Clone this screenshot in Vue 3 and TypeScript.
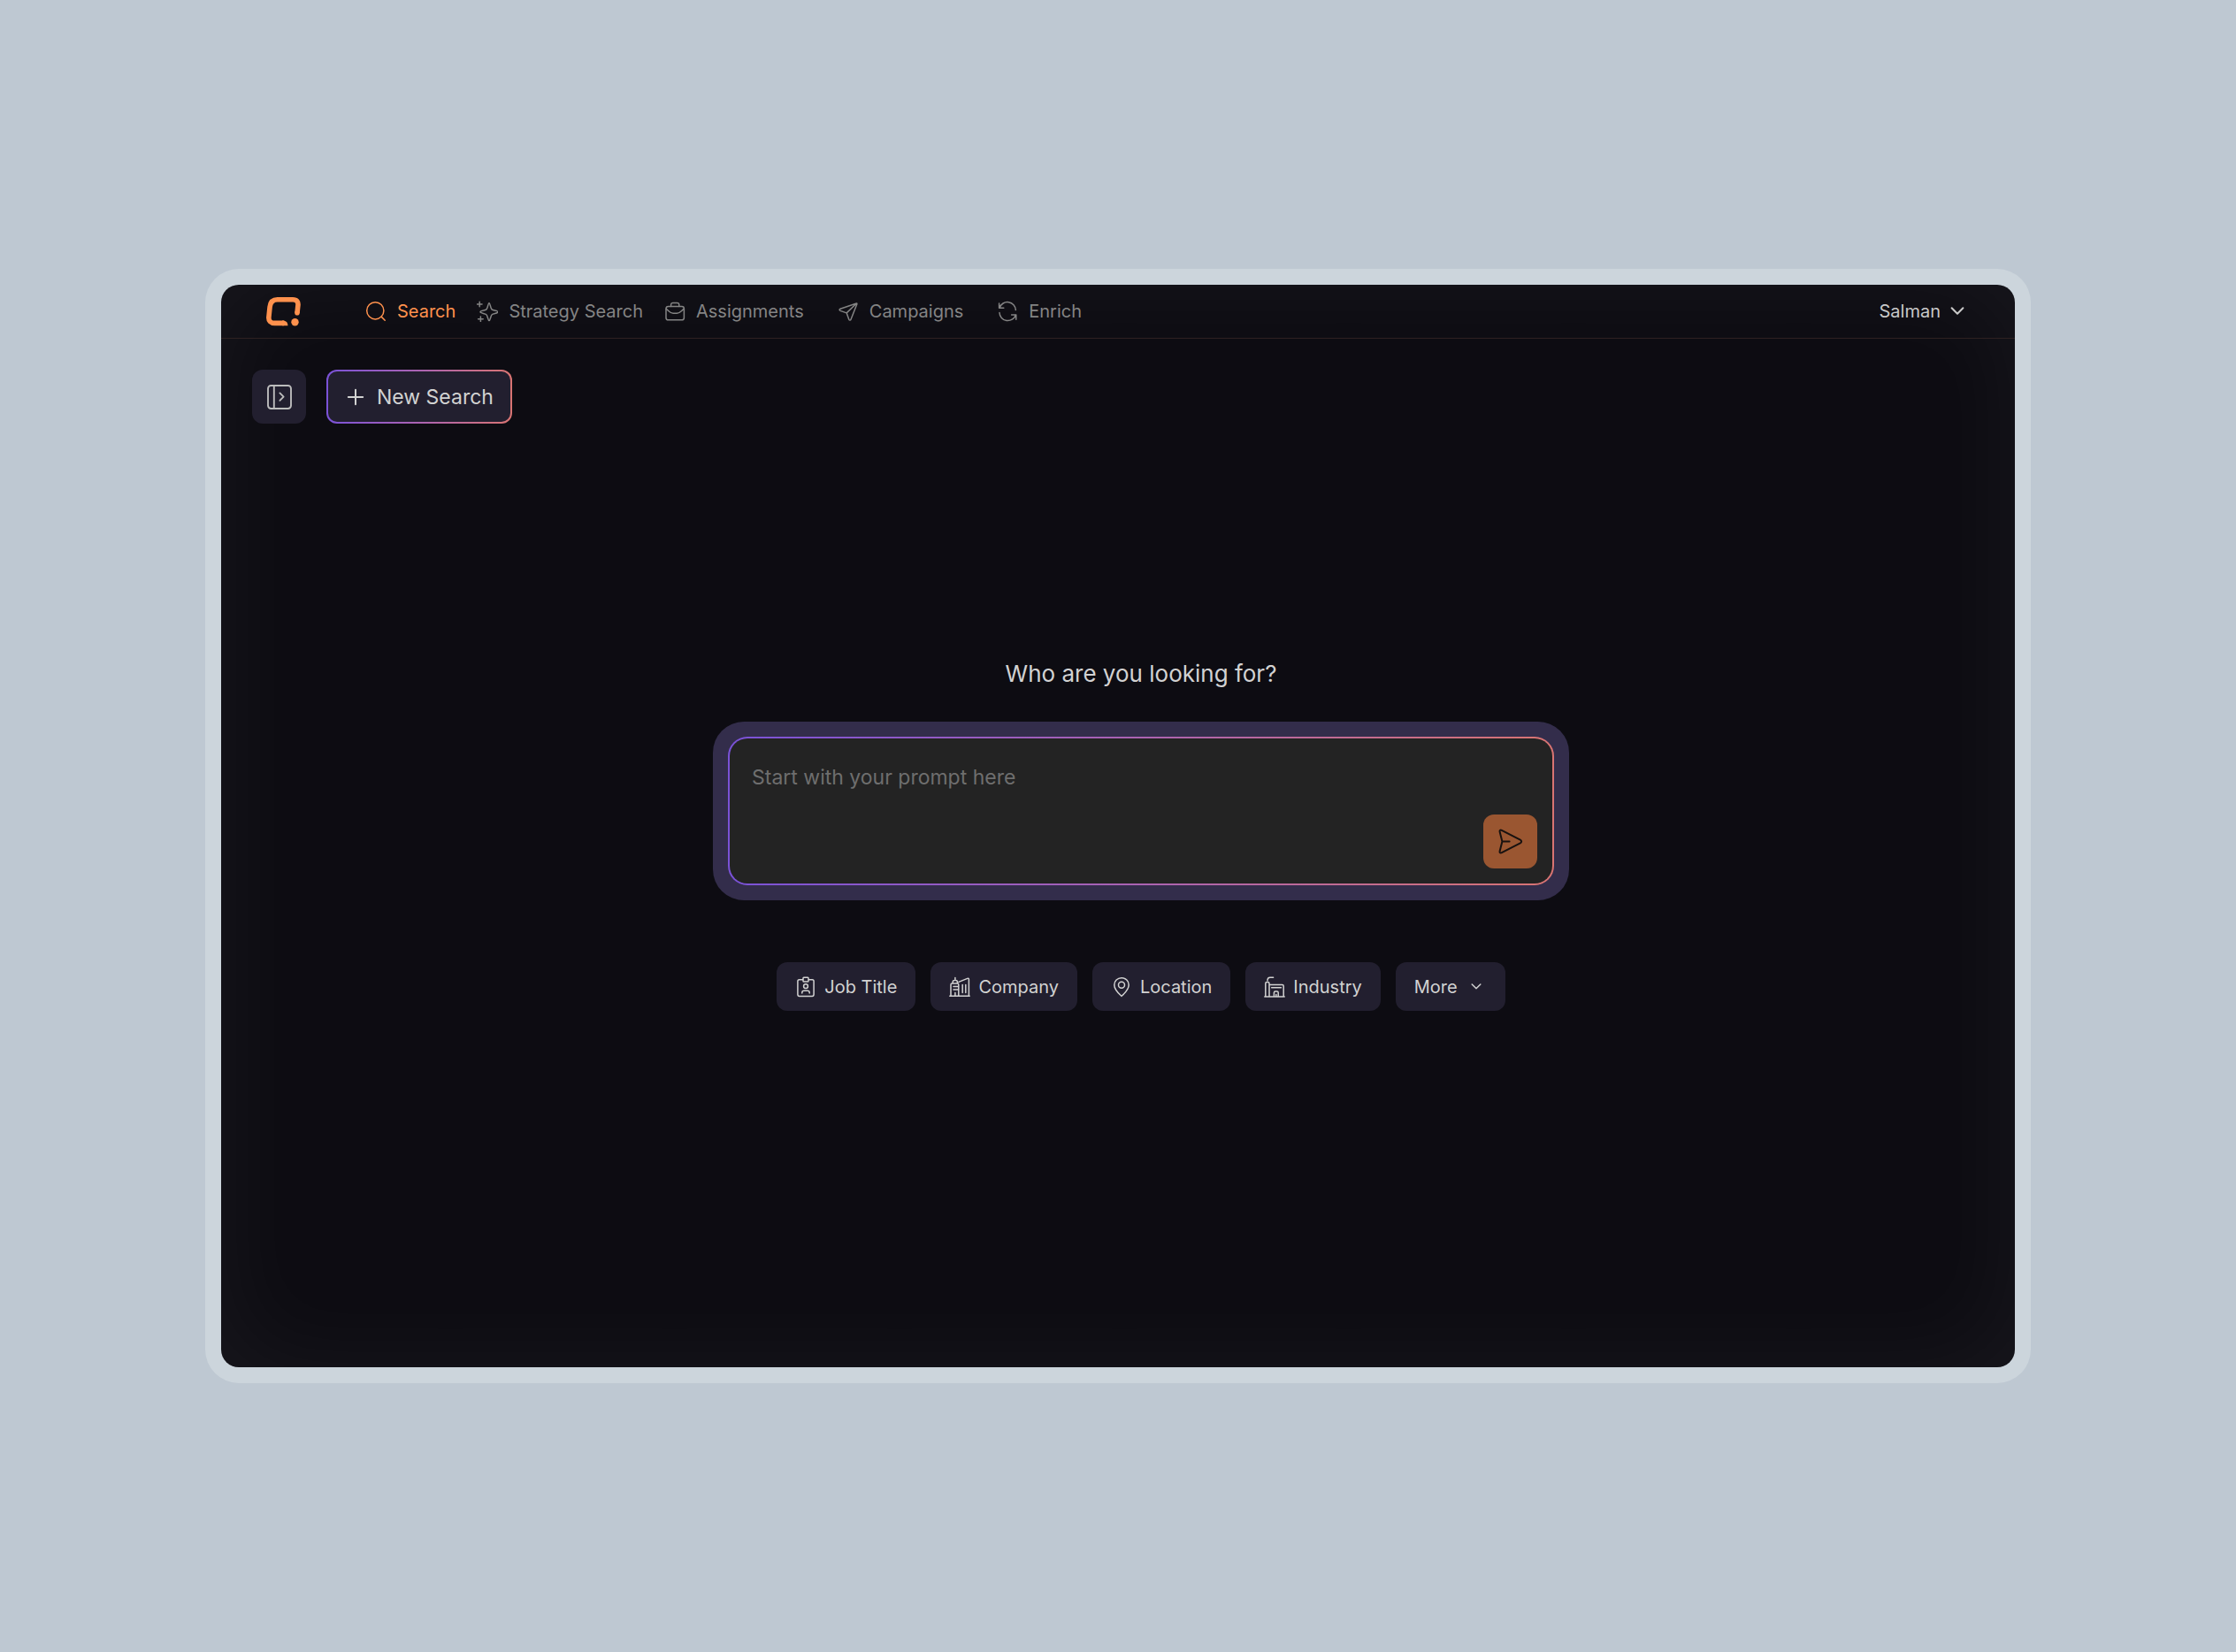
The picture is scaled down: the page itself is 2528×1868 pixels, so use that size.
<script setup lang="ts">
import { ref } from 'vue'

interface NavItem {
  id: string
  label: string
  active?: boolean
  spaced?: boolean
}

const navItems: NavItem[] = [
  { id: 'search', label: 'Search', active: true },
  { id: 'strategy', label: 'Strategy Search' },
  { id: 'assignments', label: 'Assignments' },
  { id: 'campaigns', label: 'Campaigns', spaced: true },
  { id: 'enrich', label: 'Enrich', spaced: true },
]

const filters = [
  { id: 'job', label: 'Job Title' },
  { id: 'company', label: 'Company' },
  { id: 'location', label: 'Location' },
  { id: 'industry', label: 'Industry' },
]

const prompt = ref('')
</script>

<template>
  <div class="page">
    <div class="frame">
      <div class="app">
        <header class="header">
          <a class="logo" href="#" aria-label="Home">
            <svg width="40" height="33" viewBox="0 0 40 33" fill="none">
              <path
                d="M21 29.4H10.5C6 29.4 3.5 26.8 3.9 22.6L5.1 11C5.7 5.8 8.6 2.8 13.6 2.8H31C35.6 2.8 37.4 5.4 36.9 9.4L36 17.8"
                stroke="#ff914d" stroke-width="5.6"
              />
              <circle cx="36" cy="17.8" r="2.8" fill="#ff914d" />
              <path d="M19 26.6H20C23.4 26.6 25.4 28.8 25.4 32.2H19Z" fill="#ff914d" />
              <circle cx="33.5" cy="28.3" r="4.2" fill="#ff914d" />
            </svg>
          </a>

          <nav class="nav">
            <a
              v-for="item in navItems"
              :key="item.id"
              href="#"
              class="nav-item"
              :class="{ active: item.active, spaced: item.spaced }"
            >
              <svg class="icon" viewBox="0 0 24 24">
                <g v-if="item.id === 'search'">
                  <circle cx="11.3" cy="11.3" r="9.6" />
                  <path d="M18.4 18.4L22.2 22.2" />
                </g>
                <g v-else-if="item.id === 'strategy'">
                  <path d="M14 2.4C15.2 2.4 15.4 9 17.4 10.2C18.6 11.1 24 11.4 24 12.8C24 14.2 18.6 14.4 17.4 15.5C15.6 17 15.3 22.6 14 22.6C12.7 22.6 12.5 17 10.6 15.5C9.4 14.4 4 14.2 4 12.8C4 11.4 9.4 11.1 10.6 10.2C12.6 9 12.8 2.4 14 2.4Z" />
                  <path d="M3.2 1.2V6.8M0.4 4H6M4.4 18V23.6M1.6 20.8H7.2" />
                </g>
                <g v-else-if="item.id === 'assignments'">
                  <rect x="2" y="6.6" width="20.4" height="15.2" rx="2.6" />
                  <path d="M7.6 6.4V4.6C7.6 3.2 8.4 2.4 9.8 2.4H14.6C16 2.4 16.8 3.2 16.8 4.6V6.4M2.2 9.4C5 11.2 6.6 14.2 10 14.2H14.4C17.8 14.2 19.4 11.2 22.2 9.4" />
                </g>
                <g v-else-if="item.id === 'campaigns'">
                  <path d="M21.4 3L3 9.2C1.8 9.7 1.8 11 3 11.4L10.2 13.9L12.8 21.2C13.3 22.4 14.6 22.4 15 21.2L21.8 4C22 3.2 21.8 2.9 21.4 3ZM10.2 13.9L21.4 3" />
                </g>
                <g v-else>
                  <path d="M2.6 3V8.2H7.8M3.1 8A9.4 9.4 0 0 1 21.4 10.6M21.8 21.2V16H16.6M21.3 16.2A9.4 9.4 0 0 1 3 13.4" />
                </g>
              </svg>
              <span>{{ item.label }}</span>
            </a>
          </nav>

          <button class="account" type="button">
            <span>Salman</span>
            <svg width="16" height="16" viewBox="0 0 16 16">
              <path d="M1.6 4.2L8 10.8L14.4 4.2" />
            </svg>
          </button>
        </header>

        <div class="toolbar">
          <button class="toggle" type="button" aria-label="Open sidebar">
            <svg width="28" height="28" viewBox="0 0 28 28">
              <rect x="1" y="1" width="26" height="26" rx="3.4" />
              <path d="M7.8 1V27M14.4 9.4L18.6 13.6L14.4 17.8" />
            </svg>
          </button>
          <button class="new-search" type="button">
            <svg width="24" height="24" viewBox="0 0 24 24">
              <path d="M12 3.8V20.2M3.8 12H20.2" />
            </svg>
            <span>New Search</span>
          </button>
        </div>

        <main class="main">
          <h1 class="title"><label for="prompt">Who are you looking for?</label></h1>

          <form class="prompt" @submit.prevent>
            <div class="prompt-box">
              <textarea id="prompt" v-model="prompt" placeholder="Start with your prompt here"></textarea>
              <button class="send" type="submit" aria-label="Send">
                <svg width="32" height="32" viewBox="1 0 32 32">
                  <path d="M4.6 4.6C4.2 2.9 5.3 2.1 6.8 2.8L27.8 13.6C29.6 14.6 29.6 16.4 27.8 17.4L6.8 28.2C5.3 28.9 4.2 28.1 4.6 26.4L7.4 15.5ZM7.4 15.5H15.6" />
                </svg>
              </button>
            </div>
          </form>

          <div class="filters">
            <button v-for="f in filters" :key="f.id" class="chip" type="button">
              <svg class="icon" viewBox="0 0 24 24">
                <g v-if="f.id === 'job'">
                  <rect x="2.9" y="3.8" width="18.2" height="18.6" rx="1.8" />
                  <rect class="mask" x="9" y="1.2" width="6" height="4.8" rx="0.8" />
                  <circle cx="12" cy="11.2" r="2.4" />
                  <path d="M7.8 18.9V18.4C7.8 16.9 8.7 16.2 10 16.2H14C15.3 16.2 16.2 16.9 16.2 18.4V18.9" />
                </g>
                <g v-else-if="f.id === 'company'">
                  <path d="M0.8 22.2H23.2M2 22V9.4C2 8.4 2.6 7.9 3.4 7.9H9.4C10.4 7.9 10.8 8.4 10.8 9.4V22M4.2 7.8V6.4C4.2 5.2 5 4.6 6.2 4.6H7.6C8.8 4.6 9.4 5.2 9.4 6.4V7.8M6.9 4.4V1.4M5 11.6H10.6M5 15H10.6M6.9 22V18.6M11 6.4L20.8 2.4C21.8 2 22.4 2.5 22.4 3.4V22M15.2 9.4V18.6M18.8 9.4V18.6" />
                </g>
                <g v-else-if="f.id === 'location'">
                  <path d="M12 22.4C14.6 20 20.2 15.4 20.2 9.8C20.2 5.1 16.6 1.7 12 1.7S3.8 5.1 3.8 9.8C3.8 15.4 9.4 20 12 22.4Z" />
                  <circle cx="12" cy="9.8" r="3.5" />
                </g>
                <g v-else>
                  <path d="M0.8 23H23.2M1.8 23V8C1.8 7 2.4 6.4 3.4 6.4H4.4C5.4 6.4 6 7 6 8V23M6 9.4H20.6C21.6 9.4 22.2 10 22.2 11V23M8.6 12.8H19.4M11.4 23V18.6C11.4 17.6 12 17 12.8 17H14.8C15.6 17 16.2 17.6 16.2 18.6V23M13.8 23V20.4M4 4.8C4 2.2 5 1.2 7 1.2H10.6" />
                </g>
              </svg>
              <span>{{ f.label }}</span>
            </button>
            <button class="chip" type="button">
              <span>More</span>
              <svg class="icon" viewBox="0 0 24 24">
                <path d="M7.2 9L12 13.8L16.8 9" />
              </svg>
            </button>
          </div>
        </main>
      </div>
    </div>
  </div>
</template>

<style>
body {
  margin: 0;
  background: #bec8d2;
}
</style>

<style scoped>
.page {
  box-sizing: border-box;
  min-height: 100vh;
  padding: 304px 232px;
  display: flex;
  background: #bec8d2;
  font-family: Inter, 'Liberation Sans', sans-serif;
  font-size: 20px;
  line-height: 24px;
}

.frame {
  flex: 1;
  display: flex;
  padding: 18px;
  border-radius: 38px;
  background: #ccd5dc;
}

.app {
  flex: 1;
  display: flex;
  flex-direction: column;
  border-radius: 20px;
  overflow: hidden;
  background: #0d0c12;
  box-shadow: inset 0 0 120px rgba(255, 255, 255, 0.05);
}

button {
  margin: 0;
  padding: 0;
  border: 0;
  background: none;
  color: inherit;
  font: inherit;
  cursor: pointer;
}

a {
  color: inherit;
  text-decoration: none;
}

svg {
  display: block;
  flex: none;
}

.icon {
  width: 24px;
  height: 24px;
}

.header {
  box-sizing: border-box;
  height: 61px;
  padding: 0 57px 1px 50px;
  display: flex;
  align-items: center;
  border-bottom: 1px solid #2e2121;
}

.logo {
  padding-top: 2px;
}

.nav {
  margin-left: 73px;
  display: flex;
  gap: 24px;
  color: #848484;
}

.nav-item {
  display: flex;
  align-items: center;
  gap: 12px;
}

.nav-item.spaced {
  margin-left: 14px;
}

.nav-item.active {
  color: #ff914d;
}

.nav-item svg,
.account svg,
.toggle svg,
.new-search svg,
.send svg,
.chip svg {
  fill: none;
  stroke: currentColor;
  stroke-width: 1.5;
  stroke-linecap: round;
  stroke-linejoin: round;
}

.account {
  margin-left: auto;
  display: flex;
  align-items: center;
  gap: 11px;
  color: #c8c8c8;
}

.account svg {
  stroke-width: 2;
}

.toolbar {
  padding: 35px 35px 0;
  display: flex;
  gap: 23px;
  color: #d2d2d2;
}

.toggle {
  width: 61px;
  height: 61px;
  display: flex;
  align-items: center;
  justify-content: center;
  border-radius: 12px;
  background: #221f2f;
  color: #bcbcbc;
}

.toggle svg {
  stroke-width: 1.9;
}

.new-search {
  box-sizing: border-box;
  height: 61px;
  padding: 0 19px;
  display: flex;
  align-items: center;
  gap: 12px;
  border: 2px solid transparent;
  border-radius: 12px;
  background:
    linear-gradient(#221f2f, #221f2f) padding-box,
    linear-gradient(90deg, #7a52d8, #ab63b2 50%, #d97472) border-box;
  font-size: 23px;
}

.new-search svg {
  stroke-width: 2;
}

.main {
  flex: 1;
  padding: 0 0 136px 52px;
  display: flex;
  flex-direction: column;
  align-items: center;
  justify-content: center;
  color: #d2d2d2;
}

.title {
  margin: 0;
  font-size: 26px;
  line-height: 32px;
  font-weight: 400;
}

.prompt {
  box-sizing: border-box;
  width: 100%;
  max-width: 968px;
  margin-top: 38px;
  padding: 17px;
  border-radius: 35px;
  background: #332d4b;
}

.prompt-box {
  box-sizing: border-box;
  height: 168px;
  padding: 16px 17px 17px;
  display: flex;
  align-items: flex-end;
  border: 2px solid transparent;
  border-radius: 22px;
  background:
    linear-gradient(#232323, #232323) padding-box,
    linear-gradient(90deg, #7a52d8, #ab63b2 50%, #d97472) border-box;
}

textarea {
  box-sizing: border-box;
  flex: 1;
  height: 100%;
  margin: 0;
  padding: 12px 8px;
  border: 0;
  outline: 0;
  resize: none;
  background: none;
  color: #d2d2d2;
  font: inherit;
  font-size: 23px;
  line-height: 32px;
}

textarea::placeholder {
  color: #6e6e6e;
  opacity: 1;
}

.send {
  width: 61px;
  height: 61px;
  display: flex;
  align-items: center;
  justify-content: center;
  border-radius: 12px;
  background: #9a5631;
  color: #17110f;
}

.send svg {
  stroke-width: 2;
}

.filters {
  margin-top: 70px;
  display: flex;
  gap: 17px;
}

.chip {
  height: 55px;
  padding: 0 21px;
  display: flex;
  align-items: center;
  gap: 9px;
  border-radius: 12px;
  background: #221f2f;
}

.chip .mask {
  fill: #221f2f;
}
</style>
